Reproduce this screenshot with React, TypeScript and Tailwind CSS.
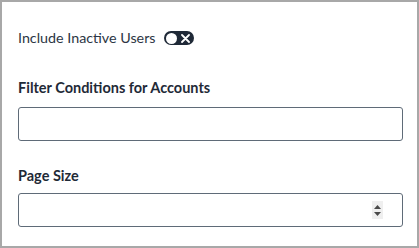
export default function App() {
    return (
        <div className="w-[419px] h-[248px] bg-white border-2 border-[#a8a8a8] pl-4 pr-[14px] font-['Lato','Liberation_Sans',sans-serif]">
            <div className="flex items-center h-[16px] mt-[28px]">
                <span className="text-[14.3px] text-[#2c3644] leading-none">Include Inactive Users</span>
                <button
                    type="button"
                    className="ml-[8px] flex items-center justify-between w-[30px] h-[14px] rounded-full bg-[#1f2937] pl-[2px] pr-[4px]"
                >
                    <span className="block w-[11px] h-[11px] rounded-full bg-white" />
                    <svg width="9" height="9" viewBox="0 0 9 9">
                        <path d="M1 1 L8 8 M8 1 L1 8" stroke="white" strokeWidth="1.8" strokeLinecap="round" />
                    </svg>
                </button>
            </div>

            <div className="mt-[35px]">
                <label className="block text-[14.5px] font-bold text-[#1f2a37] leading-none">
                    Filter Conditions for Accounts
                </label>
                <input
                    type="text"
                    className="block w-full h-[34px] mt-[11px] border border-[#5f6b78] rounded-[3px] bg-white px-2 outline-none"
                />
            </div>

            <div className="mt-[28px]">
                <label className="block text-[14.5px] font-bold text-[#1f2a37] leading-none">
                    Page Size
                </label>
                <div className="relative mt-[10px]">
                    <input
                        type="text"
                        className="block w-full h-[34px] border border-[#5f6b78] rounded-[3px] bg-white px-2 outline-none"
                    />
                    <div className="absolute right-[20px] top-[8px] w-[11px] h-[18px] bg-[#efefef] flex flex-col items-center justify-center gap-[3px]">
                        <svg width="7" height="4" viewBox="0 0 7 4">
                            <path d="M0 4 L3.5 0 L7 4 Z" fill="#4a4a4a" />
                        </svg>
                        <svg width="7" height="4" viewBox="0 0 7 4">
                            <path d="M0 0 L3.5 4 L7 0 Z" fill="#4a4a4a" />
                        </svg>
                    </div>
                </div>
            </div>
        </div>
    )
}
